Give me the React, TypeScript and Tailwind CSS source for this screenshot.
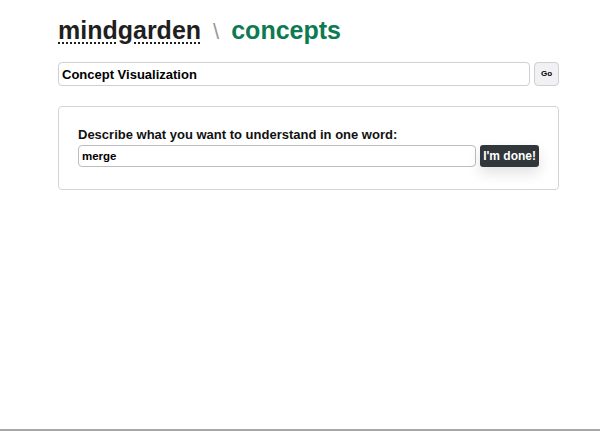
export default function App() {
  return (
    <div
      className="min-h-[431px] border-b-2 border-[#a8a8a8] bg-white text-black"
      style={{ fontFamily: '"Liberation Sans", Arial, sans-serif' }}
    >
      <div className="ml-[58px] w-[501px] pt-[14px]">
        <h1 className="flex h-[32px] items-baseline text-[25px] font-bold leading-[32px]">
          <span className="text-[#1f1f22] underline decoration-dotted decoration-[2px] underline-offset-[3px]">
            mindgarden
          </span>
          <span className="mx-[12px] text-[22px] font-light text-[#9a9a9a]">\</span>
          <span className="text-[#0d7a52]">concepts</span>
        </h1>

        <div className="mt-[16px] flex items-center gap-[4px]">
          <input
            className="h-[24px] flex-1 rounded-[4px] border border-[#cfcfd4] px-[3px] text-[13px] font-bold text-black outline-none"
            defaultValue="Concept Visualization"
          />
          <button
            type="button"
            className="h-[24px] w-[25px] rounded-[4px] border border-[#cfcfd4] bg-[#f1f1f3] text-[8px] font-bold"
          >
            Go
          </button>
        </div>

        <div className="mt-[20px] rounded-[4px] border border-[#d4d4d8] px-[19px] pb-[22px] pt-[19px]">
          <div className="text-[13px] font-bold leading-[18px] text-[#111]">
            Describe what you want to understand in one word:
          </div>
          <div className="mt-[1px] flex items-center gap-[4px]">
            <input
              className="h-[22px] flex-1 rounded-[4px] border border-[#bcbcc2] px-[3px] text-[11.5px] font-bold text-black outline-none"
              defaultValue="merge"
            />
            <button
              type="button"
              className="h-[22px] rounded-[3px] bg-[#30363a] px-[3px] text-[12px] font-semibold text-white shadow-[0_6px_14px_rgba(0,0,0,0.12)]"
            >
              I'm done!
            </button>
          </div>
        </div>
      </div>
    </div>
  );
}
